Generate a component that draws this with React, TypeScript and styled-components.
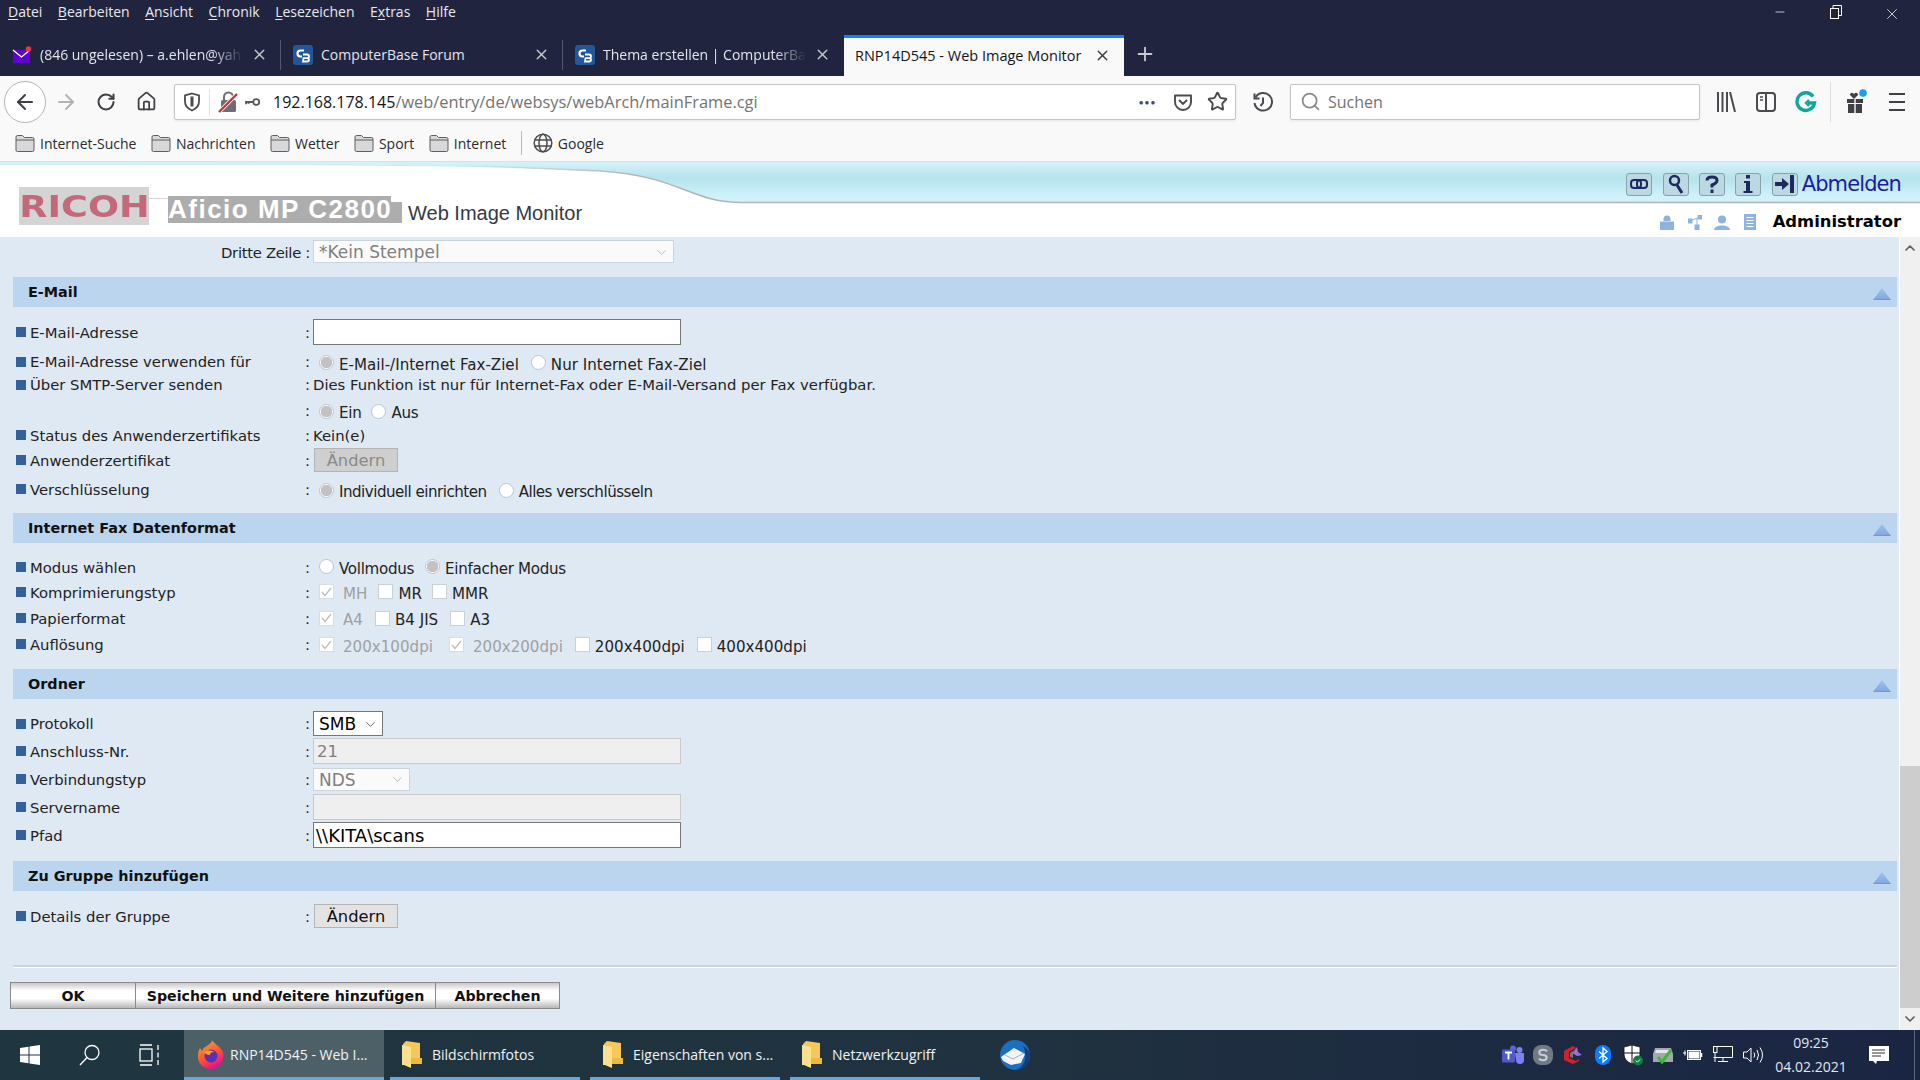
import React from "react";
import styled, { createGlobalStyle } from "styled-components";
import { ArrowLeft, ArrowRight, ChevronDown, ChevronUp, Home, Minus, Plus, RotateCw, Search, Star, X } from "lucide-react";

const Global = createGlobalStyle`
    html, body { margin: 0; padding: 0; background: #dfe9f4; }
    #root { width: 1920px; height: 1080px; overflow: hidden; }
    * { box-sizing: border-box; }
`;

const Wrap = styled.div`
    width: 1920px;
    height: 1080px;
    display: flex;
    flex-direction: column;
    font-family: "Open Sans", "Noto Sans", sans-serif;
`;

/* browser title + tabs */
const TitleBar = styled.div`
    height: 76px;
    background: #20243f;
    display: flex;
    flex-direction: column;
    flex: none;
`;

const MenuRow = styled.div`
    height: 35px;
    display: flex;
    position: relative;
    padding: 2px 0 0 8px;
    gap: 15.5px;
    color: #e8e9ee;
    font-size: 14px;
    line-height: 20px;
    u { text-underline-offset: 2px; }
`;

const WinControls = styled.div`
    margin-left: auto;
    display: flex;
    color: #fff;
    margin-top: 3px;
`;

const WinBtn = styled.div`
    width: 56px;
    display: flex;
    justify-content: center;
`;

const TabRow = styled.div`
    height: 41px;
    display: flex;
    align-items: stretch;
`;

const Tab = styled.div<{ $w: number; $active?: boolean }>`
    width: ${p => p.$w}px;
    display: flex;
    align-items: center;
    padding: ${p => (p.$active ? "0 13px 3px 11px" : "0 13px 2px 12px")};
    gap: 8px;
    position: relative;
    font-size: ${p => (p.$active ? 14.5 : 14)}px;
    color: ${p => (p.$active ? "#15141a" : "#e4e5ea")};
    background: ${p => (p.$active ? "#f9f9fa" : "transparent")};
    border-top: ${p => (p.$active ? "3px solid #0a84ff" : "0")};
    svg { flex: none; }
`;

const TabSep = styled.div`
    width: 1px;
    height: 30px;
    background: #55586d;
    align-self: center;
    position: absolute;
    right: 0;
    top: 5px;
`;

const TabText = styled.span<{ $fade?: boolean }>`
    flex: 1;
    min-width: 0;
    white-space: nowrap;
    ${p => p.$fade && "mask-image: linear-gradient(to right, #000 85%, transparent);"}
`;

const NewTab = styled.div`
    width: 42px;
    display: flex;
    align-items: center;
    justify-content: center;
    padding-bottom: 4px;
    color: #c9cad2;
`;

/* toolbar */
const Toolbar = styled.div`
    height: 85px;
    flex: none;
    background: #f9f9fa;
    display: flex;
    flex-direction: column;
    color: #3a3a40;
`;

const NavRow = styled.div`
    height: 51px;
    display: flex;
    align-items: center;
    padding-left: 4px;
`;

const NavBtn = styled.div<{ $w?: number; $color?: string }>`
    width: ${p => p.$w ?? 40}px;
    height: 36px;
    flex: none;
    display: flex;
    align-items: center;
    justify-content: center;
    color: ${p => p.$color ?? "#3f3f45"};
`;

const BackBtn = styled.div`
    width: 42px;
    height: 42px;
    flex: none;
    border-radius: 50%;
    border: 1px solid #b5b5b8;
    background: #fff;
    display: flex;
    align-items: center;
    justify-content: center;
    color: #3f3f45;
`;

const UrlBar = styled.div`
    width: 1062px;
    height: 36px;
    margin-left: 8px;
    background: #fff;
    border: 1px solid #c4c4c6;
    border-radius: 2px;
    box-shadow: 0 1px 3px rgba(0, 0, 0, 0.08);
    display: flex;
    align-items: center;
    font-size: 16px;
    flex: none;
`;

const UrlIcons = styled.div`
    width: 35px;
    height: 26px;
    display: flex;
    align-items: center;
    justify-content: center;
    border-right: 1px solid #e2e2e4;
`;

const UrlSlot = styled.div<{ $w: number }>`
    width: ${p => p.$w}px;
    display: flex;
    align-items: center;
    justify-content: center;
    flex: none;
`;

const Dots = styled.span`
    font-size: 8px;
    letter-spacing: 1px;
    color: #4a4a4f;
`;

const UrlHost = styled.span`
    color: #15141a;
`;

const UrlPath = styled.span`
    color: #737373;
    font-size: 16.4px;
`;

const UrlText = styled.div`
    flex: 1;
    padding-left: 12px;
    white-space: nowrap;
`;

const SearchBar = styled(UrlBar)`
    width: 410px;
    margin-left: 0;
    color: #737373;
    padding-left: 9px;
    gap: 7px;
`;

const ToolSep = styled.div`
    width: 1px;
    height: 40px;
    background: #dcdcde;
    margin: 0 6px 0 4px;
    flex: none;
`;

const BookmarkRow = styled.div`
    height: 34px;
    display: flex;
    align-items: center;
    padding: 0 0 2px 15px;
    font-size: 14px;
    color: #2a2a2e;
`;

const Bookmark = styled.div`
    display: flex;
    align-items: center;
    gap: 5px;
    margin-right: 14.5px;
`;

const BookmarkSep = styled.div`
    width: 1px;
    height: 24px;
    background: #b9b9bb;
    margin: 0 11px 0 0;
`;

/* device page header */
const PageHeader = styled.div`
    height: 76px;
    flex: none;
    position: relative;
    background: #fff;
    border-top: 1px solid #dcdfe2;
`;

const HeaderCurve = styled.svg`
    position: absolute;
    left: 0;
    top: 0;
    width: 1920px;
    height: 44px;
`;

const HeaderInner = styled.div`
    position: relative;
    height: 100%;
    display: flex;
`;

const Brand = styled.div`
    display: flex;
    align-items: flex-end;
    padding: 0 0 11px 19px;
`;

const RicohBox = styled.div`
    width: 130px;
    height: 38px;
    background: #d4d4d4;
    color: #c4697a;
    font: bold 30px/39px "DejaVu Sans", sans-serif;
    text-align: center;
    overflow: hidden;
    margin-bottom: 1px;
`;

const RicohText = styled.span`
    display: inline-block;
    transform: scaleX(1.22);
`;

const BrandLine = styled.div`
    width: 19px;
    height: 1px;
    background: #d4d4d4;
    align-self: flex-start;
    margin-top: 36px;
`;

const ModelBox = styled.div`
    height: 27px;
    width: 223px;
    background: #adadad;
    color: #fff;
    font: bold 26px/27px "Liberation Sans", sans-serif;
    white-space: nowrap;
    letter-spacing: 1.5px;
    margin-bottom: 3px;
`;

const ModelTail = styled.div`
    width: 11px;
    height: 21px;
    background: #adadad;
    margin-bottom: 3px;
`;

const Product = styled.div`
    font: 20px/27px "Liberation Sans", sans-serif;
    color: #333a44;
    margin: 0 0 -1px 6px;
`;

const HeaderRight = styled.div`
    margin-left: auto;
    display: flex;
    flex-direction: column;
    align-items: flex-end;
    padding: 10px 19px 0 0;
`;

const ToolLine = styled.div`
    display: flex;
    align-items: center;
    height: 24px;
`;

const HeadBtn = styled.div`
    width: 26px;
    height: 23px;
    margin-right: 10.4px;
    background: #bcd9e3;
    border: 1px solid #8aa0aa;
    border-radius: 3px;
    display: flex;
    align-items: center;
    justify-content: center;
    color: #1f2a5c;
    &:last-of-type { margin-right: 4px; }
`;

const Logout = styled.span`
    font: 21px/24px "DejaVu Sans", sans-serif;
    color: #1c1c9c;
    letter-spacing: -0.9px;
    margin-top: -1px;
`;

const RoleLine = styled.div`
    display: flex;
    align-items: center;
    height: 22px;
    margin-top: 15px;
`;

const RoleIcon = styled.div`
    width: 27.5px;
    display: flex;
    justify-content: center;
    color: #8db3de;
`;

const Role = styled.span`
    font: bold 16.4px/22px "DejaVu Sans", sans-serif;
    margin-left: 9px;
    color: #000;
`;

/* form */
const Main = styled.div`
    height: 793px;
    flex: none;
    display: flex;
`;

const Content = styled.div`
    width: 1899px;
    background: #dfe9f4;
    font: 14.8px "DejaVu Sans", sans-serif;
    color: #222;
`;

const TopRow = styled.div`
    height: 40px;
    display: flex;
    padding: 3px 0 0 221px;
`;

const TopLabel = styled.div`
    width: 92px;
    line-height: 25px;
    white-space: nowrap;
    letter-spacing: -0.3px;
`;

const Band = styled.div`
    height: 30px;
    margin: 0 2px 0 13px;
    background: #bbd5ee;
    display: flex;
    align-items: center;
    justify-content: space-between;
    padding: 0 6px 0 15px;
    font-weight: bold;
    font-size: 14.4px;
    color: #111;
`;

const Triangle = styled.div`
    width: 18px;
    height: 12px;
    margin-top: 4px;
    background: linear-gradient(#9cc0f0, #86abe2 85%, #6f8fbf);
    clip-path: polygon(50% 0, 100% 100%, 0 100%);
`;

const Section = styled.div<{ $top: number; $bottom: number }>`
    padding: ${p => p.$top}px 0 ${p => p.$bottom}px 16px;
`;

const Row = styled.div<{ $h: number }>`
    height: ${p => p.$h}px;
    padding-bottom: 2px;
    display: grid;
    grid-template-columns: 289px 8px 1fr;
    align-items: center;
`;

const Label = styled.div`
    display: flex;
    align-items: center;
    gap: 4px;
    white-space: nowrap;
`;

const Bullet = styled.i`
    width: 10px;
    height: 10px;
    background: #33619c;
    flex: none;
`;

const Colon = styled.span``;

const Value = styled.div`
    display: flex;
    align-items: center;
    white-space: nowrap;
`;

const Options = styled(Value)<{ $pt?: number }>`
    padding-left: 6px;
    padding-top: ${p => p.$pt ?? 6}px;
    font-size: 15.1px;
`;

const Option = styled.label<{ $gap?: number; $ls?: number }>`
    display: inline-flex;
    align-items: center;
    gap: 5px;
    margin-right: ${p => p.$gap ?? 12}px;
    letter-spacing: ${p => p.$ls ?? 0}px;
`;

const Radio = styled.input.attrs({ type: "radio", readOnly: true })`
    appearance: none;
    width: 15px;
    height: 15px;
    flex: none;
    margin: 0 0 4px;
    border-radius: 50%;
    background: #fff;
    border: 1px solid #b9c5d3;
    &:checked {
        background: radial-gradient(circle, #c2c2c2 0 5.5px, #fff 6px);
    }
`;

const Check = styled.span<{ $on?: boolean }>`
    width: 15px;
    height: 15px;
    margin-bottom: 4px;
    flex: none;
    background: #fff;
    border: 1px solid ${p => (p.$on ? "#dcdcdc" : "#c9d0d8")};
    display: flex;
    align-items: center;
    justify-content: center;
    color: #bdbdbd;
`;

const Muted = styled.span`
    color: #a0a0a0;
    margin-left: 4px;
`;

const Field = styled.div<{ $disabled?: boolean }>`
    width: 368px;
    height: 26px;
    background: ${p => (p.$disabled ? "#efefef" : "#fff")};
    border: 1px solid ${p => (p.$disabled ? "#c9c9c9" : "#767676")};
    color: ${p => (p.$disabled ? "#808080" : "#000")};
    font-size: ${p => (p.$disabled ? 16.5 : 18)}px;
    line-height: 25px;
    padding-left: ${p => (p.$disabled ? 3 : 2)}px;
`;

const SelectBox = styled.div<{ $w: number; $disabled?: boolean }>`
    width: ${p => p.$w}px;
    height: ${p => (p.$disabled ? 23 : 25)}px;
    background: ${p => (p.$disabled ? "#fafafa" : "#fff")};
    border: 1px solid ${p => (p.$disabled ? "#cbd3db" : "#767676")};
    color: ${p => (p.$disabled ? "#808080" : "#000")};
    font-size: 17px;
    display: flex;
    align-items: center;
    justify-content: space-between;
    padding: 1px 4px 0 5px;
    svg { color: ${p => (p.$disabled ? "#a8a8a8" : "#555")}; }
`;

const Btn = styled.div<{ $disabled?: boolean }>`
    width: 84px;
    height: 24px;
    margin-left: 1px;
    background: ${p => (p.$disabled ? "#cfcfcf" : "#e3e3e3")};
    border: 1px solid #b4b4b4;
    color: ${p => (p.$disabled ? "#8a8a8a" : "#111")};
    font-size: 16.3px;
    line-height: 24px;
    text-align: center;
`;

const Rule = styled.div`
    height: 3px;
    margin: 35px 2px 0 13px;
    background: #fff;
    border-top: 2px solid #ccd3da;
`;

const Footer = styled.div`
    display: flex;
    margin: 14px 0 0 10px;
`;

const FootBtn = styled.div<{ $w: number }>`
    width: ${p => p.$w}px;
    height: 27px;
    border: 1px solid #8a8a8a;
    margin-right: -1px;
    background: linear-gradient(#c8c8c8, #fff 30%, #fff 62%, #b8b8b8);
    font-weight: bold;
    font-size: 14.2px;
    line-height: 26px;
    text-align: center;
    color: #111;
    white-space: nowrap;
`;

const Scroll = styled.div`
    width: 21px;
    display: flex;
    flex-direction: column;
    align-items: stretch;
    background: #f0f0f0;
    border-left: 1px solid #fff;
    color: #606060;
`;

const ScrollArrow = styled.div`
    height: 22px;
    display: flex;
    align-items: center;
    justify-content: center;
`;

const ScrollTrack = styled.div`
    flex: 1;
    display: flex;
    flex-direction: column;
    justify-content: flex-end;
`;

const ScrollThumb = styled.div`
    height: 242px;
    background: #cdcdcd;
`;

/* taskbar */
const Taskbar = styled.div`
    height: 50px;
    flex: none;
    display: flex;
    align-items: stretch;
    background: linear-gradient(to right, #1f3640, #20323f 50%, #1a2543);
    color: #f0f2f4;
    font-size: 14px;
`;

const TaskIcon = styled.div<{ $w: number; $pr?: number }>`
    width: ${p => p.$w}px;
    padding-right: ${p => p.$pr ?? 0}px;
    flex: none;
    display: flex;
    align-items: center;
    justify-content: center;
`;

const TaskApp = styled.div<{ $w: number; $active?: boolean; $gap: number; $pad: number; $mr?: number }>`
    width: ${p => p.$w}px;
    flex: none;
    display: flex;
    align-items: center;
    gap: ${p => p.$gap}px;
    padding: 2px 0 0 ${p => p.$pad}px;
    margin-right: ${p => p.$mr ?? 10}px;
    white-space: nowrap;
    background: ${p => (p.$active ? "#4d6068" : "transparent")};
    border-bottom: 3px solid #63a9e1;
`;

const Tray = styled.div`
    margin-left: auto;
    display: flex;
    align-items: center;
`;

const TrayIcon = styled.div`
    width: 30px;
    display: flex;
    justify-content: center;
`;

const Clock = styled.div`
    width: 86px;
    text-align: center;
    font-size: 14px;
    line-height: 24px;
    color: #e4e8ee;
`;

const Notify = styled.div`
    width: 50px;
    margin-right: 10px;
    display: flex;
    justify-content: center;
`;

const DesktopEdge = styled.div`
    width: 6px;
    height: 100%;
    border-left: 1px solid #5c6a78;
`;

/* drawings */
const MailIcon = () => (
    <svg width="20" height="18" viewBox="0 0 20 18">
        <rect x="1" y="4" width="17" height="13" fill="#5f01d1" />
        <path d="M1 4l8.5 7L18 4" fill="none" stroke="#fff" strokeWidth="1.3" />
        <circle cx="16.5" cy="3" r="2.8" fill="#f0323c" />
    </svg>
);

const CbIcon = () => (
    <svg width="20" height="20" viewBox="0 0 20 20">
        <rect width="20" height="20" rx="3" fill="#22579c" />
        <path d="M11 5.5H7.5Q4.5 5.5 4.5 8.5T7.5 11.5H9" fill="none" stroke="#fff" strokeWidth="2.2" />
        <path d="M10 9.5h4q2 0 2 1.8t-2 1.8h-3.5M10.5 13.1h3.5q2 0 2 1.7t-2 1.7h-4z" fill="none" stroke="#fff" strokeWidth="1.8" />
    </svg>
);

const ShieldIcon = () => (
    <svg width="18" height="20" viewBox="0 0 18 20" fill="none" stroke="#4a4a4f" strokeWidth="1.8">
        <path d="M9 1.5l7 2v6q0 6-7 9-7-3-7-9v-6z" />
        <path d="M9 4.5v10" strokeWidth="3" />
    </svg>
);

const LockOff = () => (
    <svg width="20" height="22" viewBox="0 0 20 22">
        <path d="M6 9V6a4.5 4.5 0 0 1 9 0v3" fill="none" stroke="#6e6e72" strokeWidth="2" />
        <rect x="3" y="9" width="15" height="12" rx="1.5" fill="#6e6e72" />
        <path d="M1 21L19 3" stroke="#f0f0f0" strokeWidth="4" />
        <path d="M1 21L19 3" stroke="#e0222d" strokeWidth="2.2" />
    </svg>
);

const KeyIcon = () => (
    <svg width="22" height="12" viewBox="0 0 22 12" fill="none" stroke="#58585c">
        <circle cx="15.5" cy="6" r="4" strokeWidth="2.5" />
        <path d="M11 6H1.5v3M5 6v2.5" strokeWidth="2.6" />
    </svg>
);

const PocketIcon = () => (
    <svg width="20" height="20" viewBox="0 0 20 20" fill="none" stroke="#4a4a4f" strokeWidth="1.9">
        <path d="M2 3.5h16v6.5a8 8 0 0 1-16 0z" strokeLinejoin="round" />
        <path d="M6.5 8.5L10 12l3.5-3.5" strokeLinecap="round" />
    </svg>
);

const HistoryIcon = () => (
    <svg width="22" height="22" viewBox="0 0 22 22" fill="none" stroke="#4a4a4f" strokeWidth="2">
        <path d="M3.5 6.5A8.8 8.8 0 1 1 2.5 12" />
        <path d="M2.5 2.5v5h5" />
        <path d="M11 6.5V12l-2.5 3" />
    </svg>
);

const LibraryIcon = () => (
    <svg width="20" height="20" viewBox="0 0 20 20" stroke="#4a4a4f" strokeWidth="2" fill="none">
        <path d="M2 0v20M6.5 0v20M11 0v20M14 0l5 20" />
    </svg>
);

const SidebarIcon = () => (
    <svg width="20" height="20" viewBox="0 0 20 20" fill="none" stroke="#4a4a4f" strokeWidth="2">
        <rect x="1" y="1" width="18" height="18" rx="3" />
        <path d="M10 1v18" />
        <path d="M4 5h3M4 8h3" strokeWidth="1.3" />
    </svg>
);

const GrammarlyIcon = () => (
    <svg width="22" height="22" viewBox="0 0 22 22" fill="none" stroke="#11a797" strokeWidth="3.4">
        <path d="M18 5.5A8.8 8.8 0 1 0 19.5 12H13" />
        <path d="M14 9l-3 3 3 3" strokeWidth="2.4" />
    </svg>
);

const GiftIcon = () => (
    <svg width="24" height="26" viewBox="0 0 24 26">
        <circle cx="18" cy="4" r="3.8" fill="#1c9cf5" />
        <path d="M5 6c0-3 4-3 4 0 0-3 4-3 4 0l-4 4z" fill="#3f3f45" />
        <path d="M2 10h7.3v4H2zM10.7 10H18v4h-7.3zM3 15h6.3v9H3zM10.7 15H17v9h-6.3z" fill="#3f3f45" />
    </svg>
);

const Hamburger = () => (
    <svg width="16" height="20" viewBox="0 0 16 20" stroke="#3f3f45" strokeWidth="2.2">
        <path d="M0 2h16M0 10h16M0 18h16" />
    </svg>
);

const RestoreIcon = () => (
    <svg width="12" height="14" viewBox="0 0 12 14" fill="none" stroke="#fff" strokeWidth="1">
        <rect x="0.5" y="3.5" width="8" height="10" />
        <path d="M3 3.5V.5h8.5v10H8.5" />
    </svg>
);

const FolderLine = () => (
    <svg width="20" height="18" viewBox="0 0 20 18">
        <path d="M1 3q0-1.5 1.5-1.5h5L9.5 3.5h8q1.5 0 1.5 1.5v11q0 1.5-1.5 1.5h-15Q1 17.5 1 16z" fill="#d8d8da" stroke="#5f5f63" />
        <path d="M1 6h18" stroke="#5f5f63" />
    </svg>
);

const GlobeIcon = () => (
    <svg width="20" height="20" viewBox="0 0 20 20" fill="none" stroke="#4a4a4f" strokeWidth="1.5">
        <circle cx="10" cy="10" r="8.8" />
        <ellipse cx="10" cy="10" rx="4" ry="8.8" />
        <path d="M1.5 7h17M1.5 13h17" />
    </svg>
);

const LinkGlyph = () => (
    <svg width="18" height="12" viewBox="0 0 18 12" fill="none" stroke="currentColor" strokeWidth="2">
        <rect x="1" y="2" width="10" height="8" rx="3" />
        <rect x="7" y="2" width="10" height="8" rx="3" />
    </svg>
);

const LensGlyph = () => (
    <svg width="16" height="20" viewBox="0 0 16 20" fill="none" stroke="currentColor">
        <circle cx="6.5" cy="6.5" r="4.5" strokeWidth="2.5" />
        <path d="M9 11l5 8" strokeWidth="3" />
    </svg>
);

const HelpGlyph = () => (
    <svg width="14" height="18" viewBox="0 0 14 18" fill="none" stroke="currentColor" strokeWidth="3">
        <path d="M2 5.5Q2 2 7 2t5 3.5Q12 8 7 10v2.5" />
        <path d="M7 14.5V18" />
    </svg>
);

const InfoGlyph = () => (
    <svg width="10" height="18" viewBox="0 0 10 18" fill="currentColor">
        <rect x="3" y="0" width="4" height="3.5" />
        <path d="M1 6h6v10h2.5v2H.5v-2H3V8H1z" />
    </svg>
);

const LogoutGlyph = () => (
    <svg width="20" height="18" viewBox="0 0 20 18" fill="currentColor">
        <path d="M0 7h7V3l7 6-7 6v-4H0z" />
        <rect x="15" y="0" width="4" height="18" />
    </svg>
);

const LockSmall = () => (
    <svg width="14" height="15" viewBox="0 0 14 15" fill="currentColor">
        <path d="M3.5 6V4a3.5 3.5 0 0 1 7 0v2z" />
        <rect y="6.5" width="14" height="8.5" />
    </svg>
);

const NetSmall = () => (
    <svg width="14" height="15" viewBox="0 0 14 15" fill="currentColor" stroke="currentColor">
        <rect x="10" y="0" width="4" height="4" />
        <rect x="0" y="4" width="4" height="4" />
        <rect x="7" y="10" width="4" height="5" />
        <path d="M2 6l10-4M9 12V4" fill="none" />
    </svg>
);

const UserSmall = () => (
    <svg width="16" height="15" viewBox="0 0 16 15" fill="currentColor">
        <circle cx="8" cy="4.5" r="4" />
        <path d="M0 15q0-3.5 6-4.5h4q6 1 6 4.5z" />
    </svg>
);

const DocSmall = () => (
    <svg width="12" height="16" viewBox="0 0 12 16">
        <rect width="12" height="16" fill="currentColor" />
        <path d="M2.5 3.5h7M2.5 6.5h7M2.5 9.5h7M2.5 12.5h7" stroke="#fff" />
    </svg>
);

const CheckMark = () => (
    <svg width="11" height="10" viewBox="0 0 11 10" fill="none" stroke="currentColor" strokeWidth="1.3">
        <path d="M1 5l3 3.5L10 1" />
    </svg>
);

const WinLogo = () => (
    <svg width="20" height="20" viewBox="0 0 20 20" fill="#fff">
        <path d="M0 3l8.5-1.3v7.8H0zM9.5 1.5L20 0v9.500H9.500zM0 10.500h8.500v7.800L0 17zM9.500 10.500H20V20L9.500 18.500z" />
    </svg>
);

const SearchTask = () => (
    <svg width="22" height="22" viewBox="0 0 22 22" fill="none" stroke="#fff" strokeWidth="1.3">
        <circle cx="13" cy="8.5" r="7" />
        <path d="M8 13.5L1 21" />
    </svg>
);

const TaskView = () => (
    <svg width="22" height="22" viewBox="0 0 22 22" fill="none" stroke="#fff" strokeWidth="1.3">
        <path d="M1 1h12M1 21h12" />
        <rect x="1" y="5" width="12" height="12" />
        <path d="M19 1v5M19 8.5v5M19 16v5" />
    </svg>
);

const FirefoxIcon = () => (
    <svg width="28" height="30" viewBox="0 0 28 30">
        <defs>
            <linearGradient id="ff" x1="0" y1="0" x2="0.5" y2="1">
                <stop offset="0" stopColor="#ffb224" />
                <stop offset="0.6" stopColor="#ff5634" />
                <stop offset="1" stopColor="#e31587" />
            </linearGradient>
        </defs>
        <path d="M15 0c1 3 8 6 11 12 2 8-3 17-12 17C6 29 0 23 1 15c0-3 1-5 2-7l2 3c1-3 3-4 5-5 2-2 5-3 5-6z" fill="url(#ff)" />
        <circle cx="14" cy="16" r="6.5" fill="#5b2fb5" />
        <path d="M7 12c3-2 8-2 10 0-3 0-4 1-4 3-3 0-5-1-6-3z" fill="#ff9a2e" />
    </svg>
);

const FolderTask = () => (
    <svg width="20" height="27" viewBox="0 0 20 27">
        <path d="M4 0l14 2v21H1V3z" fill="#f6c85c" />
        <path d="M0 4l9 2v21l-7-3H0z" fill="#fde08e" />
        <path d="M9 17h11v6H9z" fill="#edb844" />
    </svg>
);

const Thunderbird = () => (
    <svg width="30" height="30" viewBox="0 0 30 30">
        <circle cx="15" cy="15" r="15" fill="#1b6fc2" />
        <path d="M30 15a15 15 0 0 1-15 15c10-3 13-13 8-24 4 2 7 5 7 9z" fill="#12407f" />
        <path d="M1 17l13-9 11 6-4 9-10 2-8-4z" fill="#f4f4f6" />
        <path d="M5 15l8 4 11-6" fill="none" stroke="#9fb2c8" />
    </svg>
);

const TeamsIcon = () => (
    <svg width="22" height="20" viewBox="0 0 22 20">
        <circle cx="17.5" cy="5" r="3" fill="#7b83eb" />
        <path d="M13 8h9v7a4 4 0 0 1-8 0z" fill="#7b83eb" />
        <circle cx="11" cy="3.5" r="3" fill="#5f67d6" />
        <rect y="4.5" width="13" height="13" rx="1" fill="#5059c9" />
        <path d="M3 7.5h7M6.5 7.5v7" stroke="#fff" strokeWidth="1.8" />
    </svg>
);

const SkypeIcon = () => (
    <svg width="20" height="20" viewBox="0 0 20 20">
        <rect width="20" height="20" rx="8" fill="#717a84" />
        <path d="M14 6.5Q13 4.8 10 4.8 6.3 4.8 6.3 7.5 6.3 10 10 10t3.7 2.500q0 2.700-3.700 2.700-3 0-4-1.700" fill="none" stroke="#c9ced4" strokeWidth="2" />
    </svg>
);

const GameIcon = () => (
    <svg width="20" height="20" viewBox="0 0 20 20">
        <path d="M1 6l9-5 3 2-7 4v6l7 3 3-2v2l-6 3-9-4z" fill="#d2202c" />
        <path d="M9 8l5-6 1 5 4 3-5 1z" fill="#9d6be0" />
        <path d="M7 8l3-2v7l-3-1z" fill="#777" />
    </svg>
);

const BluetoothIcon = () => (
    <svg width="16" height="20" viewBox="0 0 16 20">
        <rect width="16" height="20" rx="8" fill="#0a7cff" />
        <path d="M4 6.5l8 7-4 3.5V3l4 3.5-8 7" fill="none" stroke="#fff" strokeWidth="1.3" />
    </svg>
);

const DefenderIcon = () => (
    <svg width="20" height="21" viewBox="0 0 20 21">
        <path d="M9 0l8 2v7q0 7-8 10Q1 16 1 9V2z" fill="#fff" stroke="#111" strokeWidth="0.8" />
        <path d="M9 0v19M1 8h16" stroke="#111" />
        <circle cx="15" cy="15.5" r="5" fill="#107c41" />
        <path d="M12.8 15.5l1.6 1.6 2.8-2.8" fill="none" stroke="#fff" />
    </svg>
);

const PrinterOk = () => (
    <svg width="22" height="20" viewBox="0 0 22 20">
        <path d="M3 3h16l2 6v8H1V9z" fill="#a2a8ad" />
        <path d="M4 5h14l1 3H3z" fill="#e4e6e8" />
        <path d="M6 12l4 5 9-12" fill="none" stroke="#3cb93c" strokeWidth="3" />
    </svg>
);

const BatteryIcon = () => (
    <svg width="20" height="14" viewBox="0 0 20 14" fill="none" stroke="#fff">
        <rect x="4.5" y="2.5" width="13" height="9" />
        <rect x="5.5" y="3.5" width="11" height="7" fill="#fff" stroke="none" />
        <path d="M18.5 5v4" strokeWidth="1.5" />
        <path d="M0 5h3M2 2.5v5" />
    </svg>
);

const NetworkIcon = () => (
    <svg width="20" height="18" viewBox="0 0 20 18" fill="none" stroke="#fff">
        <path d="M3.5.5h16v11h-19" />
        <rect x="0.5" y="0.5" width="3.5" height="6" />
        <path d="M2 6.5V16M10 11.5v4M5 15.5h10" />
    </svg>
);

const VolumeIcon = () => (
    <svg width="21" height="16" viewBox="0 0 21 16" fill="none" stroke="#fff">
        <path d="M.5 5h3.5L8 1v14l-4-4H.5z" />
        <path d="M11 5.5q1.5 2.5 0 5M14 3q3 5 0 10M17 .5q5 7.5 0 15" />
    </svg>
);

const NotifyIcon = () => (
    <svg width="20" height="18" viewBox="0 0 20 18">
        <path d="M0 0h20v15H8l-1 3-3-3H0z" fill="#fff" />
        <path d="M3 4h13M3 7h13M3 10h9" stroke="#333" />
    </svg>
);

function Bullets({ children }: { children: React.ReactNode }) {
    return (
        <Label>
            <Bullet />
            {children}
        </Label>
    );
}

function ChoiceCheck({ on, text, gap }: { on?: boolean; text: string; gap?: number }) {
    return (
        <Option $gap={gap}>
            <Check $on={on}>{on && <CheckMark />}</Check>
            {on ? <Muted>{text}</Muted> : text}
        </Option>
    );
}

function App() {
    return (
        <Wrap>
            <Global />
            <TitleBar>
                <MenuRow>
                    <span><u>D</u>atei</span>
                    <span><u>B</u>earbeiten</span>
                    <span><u>A</u>nsicht</span>
                    <span><u>C</u>hronik</span>
                    <span><u>L</u>esezeichen</span>
                    <span>E<u>x</u>tras</span>
                    <span><u>H</u>ilfe</span>
                    <WinControls>
                        <WinBtn><Minus size={14} strokeWidth={1.2} /></WinBtn>
                        <WinBtn><RestoreIcon /></WinBtn>
                        <WinBtn><X size={18} strokeWidth={1} /></WinBtn>
                    </WinControls>
                </MenuRow>
                <TabRow>
                    <Tab $w={281}>
                        <MailIcon />
                        <TabText $fade>(846 ungelesen) – a.ehlen@yah</TabText>
                        <X size={17} color="#c6c7cf" />
                        <TabSep />
                    </Tab>
                    <Tab $w={282}>
                        <CbIcon />
                        <TabText>ComputerBase Forum</TabText>
                        <X size={17} color="#c6c7cf" />
                        <TabSep />
                    </Tab>
                    <Tab $w={281}>
                        <CbIcon />
                        <TabText $fade>Thema erstellen | ComputerBas</TabText>
                        <X size={17} color="#c6c7cf" />
                    </Tab>
                    <Tab $w={280} $active>
                        <TabText>RNP14D545 - Web Image Monitor</TabText>
                        <X size={17} color="#3a3a40" />
                    </Tab>
                    <NewTab><Plus size={22} /></NewTab>
                </TabRow>
            </TitleBar>

            <Toolbar>
                <NavRow>
                    <BackBtn><ArrowLeft size={24} /></BackBtn>
                    <NavBtn $color="#b4b4b6"><ArrowRight size={24} /></NavBtn>
                    <NavBtn><RotateCw size={20} strokeWidth={2.4} /></NavBtn>
                    <NavBtn><Home size={21} /></NavBtn>
                    <UrlBar>
                        <UrlIcons><ShieldIcon /></UrlIcons>
                        <UrlSlot $w={35}><LockOff /></UrlSlot>
                        <UrlSlot $w={16}><KeyIcon /></UrlSlot>
                        <UrlText>
                            <UrlHost>192.168.178.145</UrlHost>
                            <UrlPath>/web/entry/de/websys/webArch/mainFrame.cgi</UrlPath>
                        </UrlText>
                        <UrlSlot $w={35}><Dots>●●●</Dots></UrlSlot>
                        <UrlSlot $w={35}><PocketIcon /></UrlSlot>
                        <UrlSlot $w={35}><Star size={21} strokeWidth={2.2} color="#4a4a4f" /></UrlSlot>
                    </UrlBar>
                    <NavBtn $w={54}><HistoryIcon /></NavBtn>
                    <SearchBar>
                        <Search size={21} color="#8a8a8d" />
                        Suchen
                    </SearchBar>
                    <NavBtn $w={6} />
                    <NavBtn><LibraryIcon /></NavBtn>
                    <NavBtn><SidebarIcon /></NavBtn>
                    <NavBtn><GrammarlyIcon /></NavBtn>
                    <ToolSep />
                    <NavBtn><GiftIcon /></NavBtn>
                    <NavBtn><Hamburger /></NavBtn>
                </NavRow>
                <BookmarkRow>
                    <Bookmark><FolderLine />Internet-Suche</Bookmark>
                    <Bookmark><FolderLine />Nachrichten</Bookmark>
                    <Bookmark><FolderLine />Wetter</Bookmark>
                    <Bookmark><FolderLine />Sport</Bookmark>
                    <Bookmark><FolderLine />Internet</Bookmark>
                    <BookmarkSep />
                    <Bookmark><GlobeIcon />Google</Bookmark>
                </BookmarkRow>
            </Toolbar>

            <PageHeader>
                <HeaderCurve viewBox="0 0 1920 44" preserveAspectRatio="none">
                    <defs>
                        <linearGradient id="band" x1="0" y1="0" x2="0" y2="1">
                            <stop offset="0" stopColor="#d5f2f9" />
                            <stop offset="0.4" stopColor="#b6e3ec" />
                            <stop offset="0.9" stopColor="#d0f3fb" />
                        </linearGradient>
                        <linearGradient id="edge" gradientUnits="userSpaceOnUse" x1="460" y1="0" x2="640" y2="0">
                            <stop offset="0" stopColor="#b0b4b6" stopOpacity="0" />
                            <stop offset="1" stopColor="#b0b4b6" />
                        </linearGradient>
                    </defs>
                    <path d="M0 0H1920V40H742C690 40 680 14 600 9C480 3 300 3 0 3Z" fill="url(#band)" />
                    <path d="M1920 40.5H742C690 40.5 680 14 600 9C560 7 510 5 460 4" fill="none" stroke="url(#edge)" strokeWidth="1.5" />
                </HeaderCurve>
                <HeaderInner>
                    <Brand>
                        <RicohBox><RicohText>RICOH</RicohText></RicohBox>
                        <BrandLine />
                        <ModelBox>Aficio MP C2800</ModelBox>
                        <ModelTail />
                        <Product>Web Image Monitor</Product>
                    </Brand>
                    <HeaderRight>
                        <ToolLine>
                            <HeadBtn><LinkGlyph /></HeadBtn>
                            <HeadBtn><LensGlyph /></HeadBtn>
                            <HeadBtn><HelpGlyph /></HeadBtn>
                            <HeadBtn><InfoGlyph /></HeadBtn>
                            <HeadBtn><LogoutGlyph /></HeadBtn>
                            <Logout>Abmelden</Logout>
                        </ToolLine>
                        <RoleLine>
                            <RoleIcon><LockSmall /></RoleIcon>
                            <RoleIcon><NetSmall /></RoleIcon>
                            <RoleIcon><UserSmall /></RoleIcon>
                            <RoleIcon><DocSmall /></RoleIcon>
                            <Role>Administrator</Role>
                        </RoleLine>
                    </HeaderRight>
                </HeaderInner>
            </PageHeader>

            <Main>
                <Content>
                    <TopRow>
                        <TopLabel>Dritte Zeile :</TopLabel>
                        <SelectBox $w={361} $disabled>*Kein Stempel<ChevronDown size={15} strokeWidth={1.2} /></SelectBox>
                    </TopRow>

                    <Band>E-Mail<Triangle /></Band>
                    <Section $top={10} $bottom={8}>
                        <Row $h={32}>
                            <Bullets>E-Mail-Adresse</Bullets><Colon>:</Colon>
                            <Value><Field /></Value>
                        </Row>
                        <Row $h={25}>
                            <Bullets>E-Mail-Adresse verwenden für</Bullets><Colon>:</Colon>
                            <Options>
                                <Option><Radio checked />E-Mail-/Internet Fax-Ziel</Option>
                                <Option><Radio />Nur Internet Fax-Ziel</Option>
                            </Options>
                        </Row>
                        <Row $h={23}>
                            <Bullets>Über SMTP-Server senden</Bullets><Colon>:</Colon>
                            <Value>Dies Funktion ist nur für Internet-Fax oder E-Mail-Versand per Fax verfügbar.</Value>
                        </Row>
                        <Row $h={28}>
                            <span /><Colon>:</Colon>
                            <Options>
                                <Option $gap={10} $ls={-0.3}><Radio checked />Ein</Option>
                                <Option $ls={-0.3}><Radio />Aus</Option>
                            </Options>
                        </Row>
                        <Row $h={22}>
                            <Bullets>Status des Anwenderzertifikats</Bullets><Colon>:</Colon>
                            <Value>Kein(e)</Value>
                        </Row>
                        <Row $h={28}>
                            <Bullets>Anwenderzertifikat</Bullets><Colon>:</Colon>
                            <Value><Btn $disabled>Ändern</Btn></Value>
                        </Row>
                        <Row $h={30}>
                            <Bullets>Verschlüsselung</Bullets><Colon>:</Colon>
                            <Options>
                                <Option $ls={-0.5}><Radio checked />Individuell einrichten</Option>
                                <Option $ls={-0.5}><Radio />Alles verschlüsseln</Option>
                            </Options>
                        </Row>
                    </Section>

                    <Band>Internet Fax Datenformat<Triangle /></Band>
                    <Section $top={13} $bottom={11}>
                        <Row $h={24}>
                            <Bullets>Modus wählen</Bullets><Colon>:</Colon>
                            <Options $pt={3}>
                                <Option $ls={-0.3} $gap={11}><Radio />Vollmodus</Option>
                                <Option $ls={-0.3}><Radio checked />Einfacher Modus</Option>
                            </Options>
                        </Row>
                        <Row $h={26}>
                            <Bullets>Komprimierungstyp</Bullets><Colon>:</Colon>
                            <Options $pt={3}>
                                <ChoiceCheck on text="MH" gap={11} />
                                <ChoiceCheck text="MR" gap={10} />
                                <ChoiceCheck text="MMR" />
                            </Options>
                        </Row>
                        <Row $h={26}>
                            <Bullets>Papierformat</Bullets><Colon>:</Colon>
                            <Options $pt={4}>
                                <ChoiceCheck on text="A4" />
                                <ChoiceCheck text="B4 JIS" />
                                <ChoiceCheck text="A3" />
                            </Options>
                        </Row>
                        <Row $h={26}>
                            <Bullets>Auflösung</Bullets><Colon>:</Colon>
                            <Options $pt={5}>
                                <ChoiceCheck on text="200x100dpi" gap={16} />
                                <ChoiceCheck on text="200x200dpi" />
                                <ChoiceCheck text="200x400dpi" />
                                <ChoiceCheck text="400x400dpi" />
                            </Options>
                        </Row>
                    </Section>

                    <Band>Ordner<Triangle /></Band>
                    <Section $top={12} $bottom={11}>
                        <Row $h={27}>
                            <Bullets>Protokoll</Bullets><Colon>:</Colon>
                            <Value><SelectBox $w={70}>SMB<ChevronDown size={15} strokeWidth={1.4} /></SelectBox></Value>
                        </Row>
                        <Row $h={28}>
                            <Bullets>Anschluss-Nr.</Bullets><Colon>:</Colon>
                            <Value><Field $disabled>21</Field></Value>
                        </Row>
                        <Row $h={28}>
                            <Bullets>Verbindungstyp</Bullets><Colon>:</Colon>
                            <Value><SelectBox $w={97} $disabled>NDS<ChevronDown size={15} strokeWidth={1.2} /></SelectBox></Value>
                        </Row>
                        <Row $h={28}>
                            <Bullets>Servername</Bullets><Colon>:</Colon>
                            <Value><Field $disabled /></Value>
                        </Row>
                        <Row $h={28}>
                            <Bullets>Pfad</Bullets><Colon>:</Colon>
                            <Value><Field>\\KITA\scans</Field></Value>
                        </Row>
                    </Section>

                    <Band>Zu Gruppe hinzufügen<Triangle /></Band>
                    <Section $top={13} $bottom={0}>
                        <Row $h={26}>
                            <Bullets>Details der Gruppe</Bullets><Colon>:</Colon>
                            <Value><Btn>Ändern</Btn></Value>
                        </Row>
                    </Section>

                    <Rule />
                    <Footer>
                        <FootBtn $w={126}>OK</FootBtn>
                        <FootBtn $w={301}>Speichern und Weitere hinzufügen</FootBtn>
                        <FootBtn $w={125}>Abbrechen</FootBtn>
                    </Footer>
                </Content>
                <Scroll>
                    <ScrollArrow><ChevronUp size={16} strokeWidth={2.6} /></ScrollArrow>
                    <ScrollTrack><ScrollThumb /></ScrollTrack>
                    <ScrollArrow><ChevronDown size={16} strokeWidth={2.6} /></ScrollArrow>
                </Scroll>
            </Main>

            <Taskbar>
                <TaskIcon $w={60}><WinLogo /></TaskIcon>
                <TaskIcon $w={60}><SearchTask /></TaskIcon>
                <TaskIcon $w={64} $pr={4}><TaskView /></TaskIcon>
                <TaskApp $w={200} $active $gap={5} $pad={13} $mr={6}><FirefoxIcon />RNP14D545 - Web I...</TaskApp>
                <TaskApp $w={190} $gap={10} $pad={12}><FolderTask />Bildschirmfotos</TaskApp>
                <TaskApp $w={190} $gap={10} $pad={13}><FolderTask />Eigenschaften von s...</TaskApp>
                <TaskApp $w={190} $gap={10} $pad={12}><FolderTask />Netzwerkzugriff</TaskApp>
                <TaskIcon $w={50}><Thunderbird /></TaskIcon>
                <Tray>
                    <TrayIcon><TeamsIcon /></TrayIcon>
                    <TrayIcon><SkypeIcon /></TrayIcon>
                    <TrayIcon><GameIcon /></TrayIcon>
                    <TrayIcon><BluetoothIcon /></TrayIcon>
                    <TrayIcon><DefenderIcon /></TrayIcon>
                    <TrayIcon><PrinterOk /></TrayIcon>
                    <TrayIcon><BatteryIcon /></TrayIcon>
                    <TrayIcon><NetworkIcon /></TrayIcon>
                    <TrayIcon><VolumeIcon /></TrayIcon>
                    <Clock>09:25<br />04.02.2021</Clock>
                    <Notify><NotifyIcon /></Notify>
                    <DesktopEdge />
                </Tray>
            </Taskbar>
        </Wrap>
    );
}

export default App;
